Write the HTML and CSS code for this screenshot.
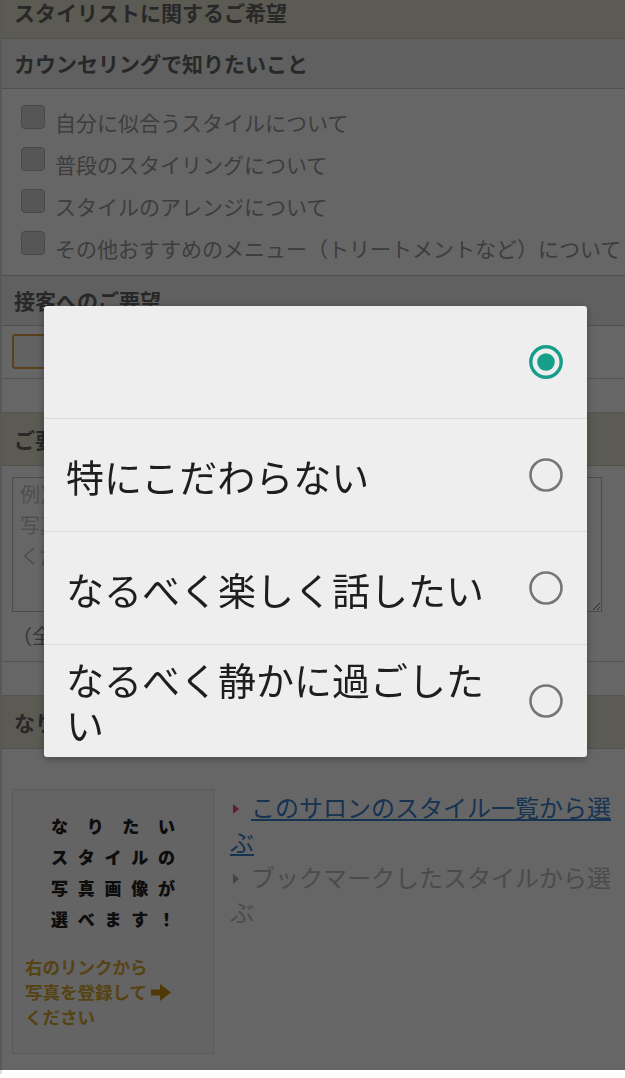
FILE: index.html
```html
<!DOCTYPE html>
<html lang="ja">
<head>
    <meta charset="UTF-8">
    <meta name="viewport" content="width=device-width, initial-scale=1.0">
    <title>スタイリストに関するご希望</title>
    <link rel="stylesheet" href="styles.css">
</head>
<body>
    <div class="page">
        <div class="sec-head top">スタイリストに関するご希望</div>
        <div class="sub-head">カウンセリングで知りたいこと</div>
        <ul class="checks">
            <li><span class="box"></span>自分に似合うスタイルについて</li>
            <li><span class="box"></span>普段のスタイリングについて</li>
            <li><span class="box"></span>スタイルのアレンジについて</li>
            <li><span class="box"></span>その他おすすめのメニュー（トリートメントなど）について</li>
        </ul>
        <div class="sub-head">接客へのご要望</div>
        <div class="select-row">
            <div class="select"></div>
        </div>

        <div class="sec-head spaced">ご要望・ご相談</div>
        <div class="note-area">
            <textarea class="memo" placeholder="例）前髪は眉上で切りそろえたいです。&#10;写真のスタイルのようにして&#10;ください。"></textarea>
            <p class="limit">（全角500文字まで）</p>
        </div>

        <div class="sec-head spaced">なりたいスタイル</div>
        <div class="style-pick">
            <div class="catch">
                <div class="catch-lines">
                    <div class="catch-line">なりたい</div>
                    <div class="catch-line">スタイルの</div>
                    <div class="catch-line">写真画像が</div>
                    <div class="catch-line">選べます！</div>
                </div>
                <p class="catch-note">右のリンクから<br>写真を登録して<svg class="arrow" width="20" height="17" viewBox="0 0 20 17"><path d="M0 5.5 H9 V0 L20 8.5 L9 17 V11.5 H0 Z" fill="currentColor"/></svg><br>ください</p>
            </div>
            <div class="links">
                <p class="link-item"><span class="mark"></span><a href="#">このサロンのスタイル一覧から選ぶ</a></p>
                <p class="link-item off"><span class="mark"></span>ブックマークしたスタイルから選ぶ</p>
            </div>
        </div>
    </div>

    <div class="overlay">
        <div class="dialog">
            <div class="opt">
                <span class="opt-text"></span>
                <svg class="radio" width="36" height="36" viewBox="0 0 36 36"><circle cx="18" cy="18" r="15.2" fill="none" stroke="#179e8a" stroke-width="3.4"/><circle cx="18" cy="18" r="8.8" fill="#179e8a"/></svg>
            </div>
            <div class="opt">
                <span class="opt-text">特にこだわらない</span>
                <svg class="radio" width="36" height="36" viewBox="0 0 36 36"><circle cx="18" cy="18" r="15.5" fill="none" stroke="#767676" stroke-width="2.6"/></svg>
            </div>
            <div class="opt">
                <span class="opt-text">なるべく楽しく話したい</span>
                <svg class="radio" width="36" height="36" viewBox="0 0 36 36"><circle cx="18" cy="18" r="15.5" fill="none" stroke="#767676" stroke-width="2.6"/></svg>
            </div>
            <div class="opt">
                <span class="opt-text">なるべく静かに過ごしたい</span>
                <svg class="radio" width="36" height="36" viewBox="0 0 36 36"><circle cx="18" cy="18" r="15.5" fill="none" stroke="#767676" stroke-width="2.6"/></svg>
            </div>
        </div>
    </div>
</body>
</html>
```

FILE: styles.css
```css
body {
    margin: 0;
    background: #fff;
    font-family: "Noto Sans CJK JP", "Noto Sans", sans-serif;
    color: #666;
}

.page {
    margin-top: -13px;
    border-left: 2px solid #ddd;
}

.sec-head {
    height: 51px;
    line-height: 51px;
    padding: 0 12px;
    background: #e4e3d3;
    border-bottom: 1px solid #cccbbd;
    font-size: 21px;
    font-weight: bold;
    color: #646464;
}

.sec-head.spaced {
    margin-top: 33px;
    border-top: 1px solid #d4d3c6;
    height: 52px;
    line-height: 52px;
}

.sub-head {
    height: 49px;
    line-height: 49px;
    padding: 0 12px;
    background: #efefef;
    border-bottom: 1px solid #c8c8c8;
    font-size: 21px;
    font-weight: bold;
    color: #646464;
}

.checks {
    list-style: none;
    margin: 0;
    padding: 12px 0 6px;
    border-bottom: 1px solid #c8c8c8;
}

.checks li {
    display: flex;
    align-items: center;
    height: 42px;
    padding-left: 19px;
    font-size: 21px;
    color: #999;
    white-space: nowrap;
}

.box {
    width: 22px;
    height: 22px;
    margin: 0 10px 10px 0;
    border: 1px solid #b4b4b4;
    border-radius: 4px;
    background: #d8d8d8;
    flex-shrink: 0;
}

.select-row {
    height: 53px;
    padding: 8px 10px 0;
    box-sizing: border-box;
    border-bottom: 1px solid #d0d0d0;
}

.select {
    width: 220px;
    height: 35px;
    box-sizing: border-box;
    border: 2px solid #e0a048;
    border-radius: 3px;
    background: #f4f4f4;
}

.note-area {
    height: 196px;
    padding: 11px 25px 0 10px;
    box-sizing: border-box;
    border-bottom: 1px solid #d0d0d0;
}

.memo {
    display: block;
    width: 590px;
    height: 135px;
    margin: 0;
    padding: 0 7px;
    box-sizing: border-box;
    border: 1px solid #bbb;
    font-family: inherit;
    font-size: 20px;
    line-height: 31px;
    background: #fff;
}

.memo::placeholder {
    color: #c4c4c4;
}

.limit {
    margin: 12px 0 0;
    font-size: 20px;
    line-height: 24px;
    color: #888;
}

.style-pick {
    display: flex;
    gap: 16px;
    height: 325px;
    padding: 40px 0 0 10px;
    box-sizing: border-box;
}

.catch {
    width: 202px;
    height: 265px;
    box-sizing: border-box;
    padding: 20px 0 0 12px;
    border: 1px solid #e2e2e2;
    background: #f9f9f9;
}

.catch-lines {
    width: 124px;
    margin-left: 26px;
}

.catch-line {
    height: 31px;
    line-height: 31px;
    font-size: 17px;
    font-weight: 900;
    color: #222;
    text-align: justify;
    text-align-last: justify;
    text-justify: inter-character;
}

.catch-note {
    margin: 20px 0 0;
    font-size: 17.5px;
    line-height: 25px;
    font-weight: bold;
    color: #d8a830;
}

.arrow {
    margin-left: 4px;
    vertical-align: -2px;
    color: #c89010;
}

.links {
    flex: 1;
    padding-right: 8px;
}

.link-item {
    margin: 0;
    font-size: 24px;
    line-height: 35px;
    color: #bbb;
}

.link-item a {
    color: #3a80cc;
}

.mark {
    display: inline-block;
    width: 0;
    height: 0;
    margin: 0 12px 0 3px;
    border-top: 5px solid transparent;
    border-bottom: 5px solid transparent;
    border-left: 6px solid #ff4a6a;
    vertical-align: 3px;
}

.link-item.off .mark {
    border-left-color: #aaa;
}

.overlay {
    position: fixed;
    top: 0;
    left: 0;
    right: 0;
    bottom: 8px;
    background: rgba(0, 0, 0, 0.6);
}

.dialog {
    width: 543px;
    margin: 306px 0 0 44px;
    background: #eeeeee;
    border-radius: 3px;
    box-shadow: 0 2px 8px rgba(0, 0, 0, 0.3);
    overflow: hidden;
}

.opt {
    display: flex;
    align-items: center;
    min-height: 112px;
    padding: 0 24px 0 22px;
    border-bottom: 1px solid #dadada;
}

.opt:last-child {
    border-bottom: none;
}

.opt-text {
    flex: 1;
    margin-right: 30px;
    font-size: 38px;
    line-height: 45px;
    color: #1e1e1e;
}

.radio {
    flex-shrink: 0;
    margin-right: -1px;
}
```
